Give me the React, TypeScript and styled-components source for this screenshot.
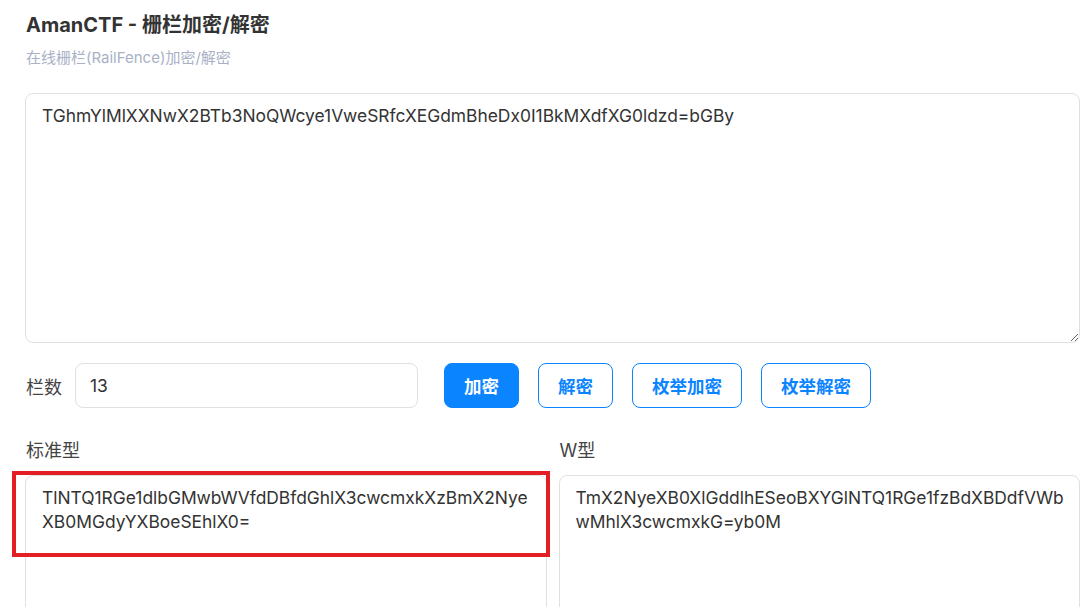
import React from 'react';
import styled, {createGlobalStyle} from "styled-components";

const GlobalStyle = createGlobalStyle`
  html, body {
    margin: 0;
    padding: 0;
    overflow: hidden;
    background: #fff;
  }
  body {
    font-family: Inter, 'Noto Sans CJK SC', sans-serif;
    color: #333;
  }
`

type OutputPropsType = {
	label: string
	value: string
	marked?: boolean
}

const OutputBox = (props: OutputPropsType) => {
	return (
		<OutputCell>
			<FieldLabel>{props.label}</FieldLabel>
			<AreaWrap>
				<OutputArea readOnly value={props.value}/>
				{props.marked && <Marker/>}
			</AreaWrap>
		</OutputCell>
	);
};

export default function App() {
	return (
		<Page>
			<GlobalStyle/>
			<Title>AmanCTF - 栅栏加密/解密</Title>
			<SubTitle>在线栅栏(RailFence)加密/解密</SubTitle>
			<MainArea defaultValue="TGhmYlMlXXNwX2BTb3NoQWcye1VweSRfcXEGdmBheDx0I1BkMXdfXG0ldzd=bGBy"/>
			<Toolbar>
				<RowLabel>栏数</RowLabel>
				<NumberInput defaultValue="13"/>
				<Buttons>
					<Button $primary>加密</Button>
					<Button>解密</Button>
					<Button>枚举加密</Button>
					<Button>枚举解密</Button>
				</Buttons>
			</Toolbar>
			<Outputs>
				<OutputBox marked label="标准型" value="TlNTQ1RGe1dlbGMwbWVfdDBfdGhlX3cwcmxkXzBmX2NyeXB0MGdyYXBoeSEhlX0="/>
				<OutputBox label="W型" value="TmX2NyeXB0XlGddlhESeoBXYGlNTQ1RGe1fzBdXBDdfVWbwMhlX3cwcmxkG=yb0M"/>
			</Outputs>
		</Page>
	);
}

const Page = styled.div`
  padding: 11px 12px 0 25px;
`

const Title = styled.h1`
  margin: 0;
  font-size: 20px;
  font-weight: 700;
  line-height: 28px;
  color: #333;
  padding-left: 1px;
`

const SubTitle = styled.div`
  margin-top: 9px;
  font-size: 15px;
  line-height: 20px;
  color: #a9b1c6;
  padding-left: 1px;
`

const MainArea = styled.textarea`
  display: block;
  box-sizing: border-box;
  width: 100%;
  height: 250px;
  margin-top: 25px;
  padding: 10px 12px 10px 16px;
  border: 1px solid #e0e0e0;
  border-radius: 8px;
  font-family: Inter, 'Noto Sans CJK SC', sans-serif;
  font-size: 17.4px;
  line-height: 24px;
  color: #333;
  outline: none;
`

const Toolbar = styled.div`
  display: flex;
  align-items: center;
  margin-top: 20px;
`

const RowLabel = styled.label`
  font-size: 18px;
  color: #444;
  padding-left: 1px;
  margin-right: 13px;
`

const NumberInput = styled.input`
  box-sizing: border-box;
  width: 343px;
  height: 45px;
  padding: 0 14px;
  border: 1px solid #e0e0e0;
  border-radius: 8px;
  font-family: Inter, sans-serif;
  font-size: 17.4px;
  color: #333;
  outline: none;
`

const Buttons = styled.div`
  display: flex;
  gap: 19px;
  margin-left: 26px;
`

const Button = styled.button<{ $primary?: boolean }>`
  box-sizing: border-box;
  height: 45px;
  padding: 0 19px;
  border: 1px solid #0a84ff;
  border-radius: 8px;
  background: ${props => props.$primary ? '#0a84ff' : '#fff'};
  color: ${props => props.$primary ? '#fff' : '#0a84ff'};
  font-family: Inter, 'Noto Sans CJK SC', sans-serif;
  font-size: 17.5px;
  font-weight: 700;
  cursor: pointer;
`

const Outputs = styled.div`
  display: grid;
  grid-template-columns: 1fr 1fr;
  gap: 12px;
  margin-top: 31px;
`

const OutputCell = styled.div`
  display: flex;
  flex-direction: column;
`

const FieldLabel = styled.div`
  font-size: 18px;
  line-height: 24px;
  color: #444;
  padding-left: 1px;
  margin-bottom: 12px;
`

const AreaWrap = styled.div`
  position: relative;
`

const OutputArea = styled.textarea`
  display: block;
  box-sizing: border-box;
  width: 100%;
  height: 220px;
  padding: 10px 12px 10px 16px;
  border: 1px solid #e0e0e0;
  border-radius: 8px;
  font-family: Inter, 'Noto Sans CJK SC', sans-serif;
  font-size: 17.4px;
  line-height: 24px;
  color: #333;
  resize: none;
  outline: none;
`

const Marker = styled.div`
  position: absolute;
  left: -13px;
  top: -4px;
  width: 538px;
  height: 86px;
  box-sizing: border-box;
  border: 4px solid #e31e24;
  pointer-events: none;
`
